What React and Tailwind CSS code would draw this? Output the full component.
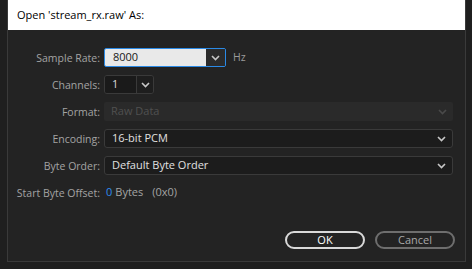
import React from 'react';

const font = { fontFamily: '"Open Sans", "Noto Sans", sans-serif' };

function Chevron({ className = 'text-[#c8c8c8]' }) {
  return (
    <svg width="9" height="6" viewBox="0 0 9 6" className={className}>
      <polyline points="1,1 4.5,4.5 8,1" fill="none" stroke="currentColor" strokeWidth="1.6" />
    </svg>
  );
}

function Row({ label, children }) {
  return (
    <div className="flex items-center h-[19px]">
      <div className="w-[93px] shrink-0 text-right pr-[1px] text-[10.5px] text-[#a3a3a3] pt-[3px]">{label}</div>
      <div className="ml-[3px] flex items-center flex-1 pr-[12px]">{children}</div>
    </div>
  );
}

export default function App() {
  return (
    <div className="w-[472px] h-[269px] bg-[#1f1f1f] flex" style={font}>
      <div className="ml-[7px] w-[459px] h-[262px] border border-[#3a3a3a] border-t-0 bg-[#232323] flex flex-col">
        <div className="h-[30px] bg-white flex items-center pl-[9px] text-[11px] text-black">
          Open 'stream_rx.raw' As:
        </div>

        <div className="flex flex-col gap-[8px] pt-[18px]">
          <Row label="Sample Rate:">
            <div className="flex h-[19px] w-[122px] rounded-[2px] border border-[#2b8ae6] overflow-hidden">
              <div className="flex-1 bg-[#e9e9e9] text-[#1a1a1a] text-[11px] pl-[8px] flex items-center">8000</div>
              <div className="w-[19px] bg-[#2b2b2b] flex items-center justify-center">
                <Chevron />
              </div>
            </div>
            <span className="ml-[7px] text-[10.5px] text-[#9a9a9a]">Hz</span>
          </Row>

          <Row label="Channels:">
            <div className="flex h-[19px] w-[50px] rounded-[3px] border border-[#3a3a3a] overflow-hidden">
              <div className="w-[31px] bg-[#1a1a1a] text-[#dcdcdc] text-[11px] pl-[7px] flex items-center">1</div>
              <div className="flex-1 border-l border-[#3a3a3a] bg-[#1e1e1e] flex items-center justify-center">
                <Chevron />
              </div>
            </div>
          </Row>

          <Row label="Format:">
            <div className="flex h-[19px] flex-1 rounded-[2px] bg-[#2a2a2a] items-center justify-between pl-[7px] pr-[6px]">
              <span className="text-[11px] text-[#505050]">Raw Data</span>
              <Chevron className="text-[#4a4a4a]" />
            </div>
          </Row>

          <Row label="Encoding:">
            <div className="flex h-[19px] flex-1 rounded-[3px] bg-[#1c1c1c] border border-[#3a3a3a] items-center justify-between pl-[7px] pr-[6px]">
              <span className="text-[11px] text-[#e0e0e0]">16-bit PCM</span>
              <Chevron />
            </div>
          </Row>

          <Row label="Byte Order:">
            <div className="flex h-[19px] flex-1 rounded-[3px] bg-[#1c1c1c] border border-[#3a3a3a] items-center justify-between pl-[7px] pr-[6px]">
              <span className="text-[11px] text-[#e0e0e0]">Default Byte Order</span>
              <Chevron />
            </div>
          </Row>

          <Row label="Start Byte Offset:">
            <div className="flex items-center text-[11px] pl-[2px]">
              <span className="text-[#2d8cf0]">0</span>
              <span className="ml-[3px] text-[#a3a3a3]">Bytes</span>
              <span className="ml-[9px] text-[#a3a3a3]">(0x0)</span>
            </div>
          </Row>
        </div>

        <div className="flex justify-end gap-[10px] mt-[29px] pr-[10px]">
          <button className="w-[80px] h-[18px] rounded-full border-2 border-[#d9d9d9] text-[11px] text-white flex items-center justify-center">
            OK
          </button>
          <button className="w-[80px] h-[18px] rounded-full border-2 border-[#6e6e6e] text-[11px] text-[#a8a8a8] flex items-center justify-center">
            Cancel
          </button>
        </div>
      </div>
    </div>
  );
}
